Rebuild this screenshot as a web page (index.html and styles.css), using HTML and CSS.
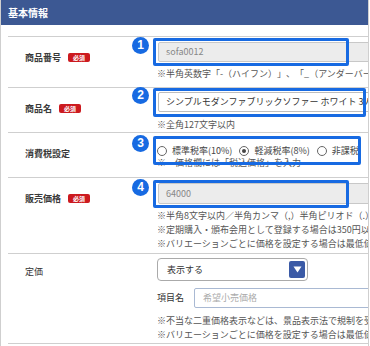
FILE: index.html
```html
<!DOCTYPE html>
<html lang="ja">
<head>
<meta charset="utf-8">
<link rel="stylesheet" href="styles.css">
</head>
<body>
<div class="panel">
  <div class="head">基本情報</div>
  <div class="rows">
    <div class="row r1">
      <div class="label">商品番号<span class="req">必須</span></div>
      <div class="value">
        <div class="input ro">sofa0012</div>
        <div class="note">※半角英数字「-（ハイフン）」、「_（アンダーバー）」</div>
      </div>
      <span class="mark m1"></span><span class="num n1">1</span>
    </div>
    <div class="row r2">
      <div class="label">商品名<span class="req">必須</span></div>
      <div class="value">
        <div class="input">シンプルモダンファブリックソファー ホワイト 3人掛け</div>
        <div class="note">※全角127文字以内</div>
      </div>
      <span class="mark m2"></span><span class="num n2">2</span>
    </div>
    <div class="row r3">
      <div class="label">消費税設定</div>
      <div class="value">
        <div class="radios">
          <span class="opt"><span class="radio"></span>標準税率(10%)</span>
          <span class="opt"><span class="radio on"></span>軽減税率(8%)</span>
          <span class="opt"><span class="radio"></span>非課税</span>
        </div>
        <div class="note tight">※　価格欄には「税込価格」を入力</div>
      </div>
      <span class="mark m3"></span><span class="num n3">3</span>
    </div>
    <div class="row r4">
      <div class="label">販売価格<span class="req">必須</span></div>
      <div class="value">
        <div class="input ro tall">64000</div>
        <div class="notes">
          <div class="note">※半角8文字以内／半角カンマ（,）半角ピリオド（.）</div>
          <div class="note">※定期購入・頒布会用として登録する場合は350円以上</div>
          <div class="note">※バリエーションごとに価格を設定する場合は最低価格</div>
        </div>
      </div>
      <span class="mark m4"></span><span class="num n4">4</span>
    </div>
    <div class="row r5">
      <div class="label">定価</div>
      <div class="value">
        <div class="select">表示する<span class="arrow"><svg width="9" height="7" viewBox="0 0 9 7"><path d="M0.5 0.5 H8.5 L4.5 6.5 Z" fill="#fff"/></svg></span></div>
        <div class="sub">
          <span class="sublabel">項目名</span>
          <div class="input plain">希望小売価格</div>
        </div>
        <div class="notes">
          <div class="note">※不当な二重価格表示などは、景品表示法で規制を受けます</div>
          <div class="note">※バリエーションごとに価格を設定する場合は最低価格</div>
        </div>
      </div>
    </div>
  </div>
</div>
</body>
</html>
```
FILE: styles.css
```css
* { box-sizing: border-box; }
html, body { margin: 0; padding: 0; background: #fff; }
body {
  font-family: "Noto Sans CJK JP", "Noto Sans", sans-serif;
  color: #333;
  text-spacing-trim: space-all;
}
.panel {
  width: 369px;
  height: 346px;
  border-left: 1px solid #cfcfcf;
  border-right: 1px solid #cfcfcf;
  overflow: hidden;
}
.head {
  height: 25px;
  background: #3c5893;
  color: #fff;
  font-size: 10px;
  font-weight: bold;
  line-height: 25px;
  padding-left: 7px;
}
.rows {
  margin-top: 11px;
  margin-left: 7px;
}
.row {
  position: relative;
  display: grid;
  grid-template-columns: 149px 1fr;
  border-top: 1px solid #cfcfcf;
}
.r5 { border-bottom: 1px solid #cfcfcf; }
.label {
  padding-left: 17px;
  padding-top: 14px;
  font-size: 9px;
  line-height: 13px;
  font-weight: bold;
  color: #3a3a3a;
  display: flex;
  align-items: flex-start;
  white-space: nowrap;
}
.r5 .label { padding-top: 11px; font-weight: normal; color: #333; }
.req {
  display: inline-block;
  margin-left: 7px;
  margin-top: 2px;
  width: 22px;
  height: 9px;
  background: #cc1a1f;
  color: #fff;
  font-size: 6px;
  line-height: 9px;
  text-align: center;
  border-radius: 2px;
}
.value { min-width: 0; white-space: nowrap; }
.r1 .value { padding-top: 5px; padding-bottom: 7px; }
.r2 .value { padding-top: 4px; padding-bottom: 1px; }
.r3 .value { padding-top: 12px; padding-bottom: 8px; }
.r4 .value { padding-top: 5px; padding-bottom: 2px; }
.r5 .value { padding-top: 4px; padding-bottom: 1px; }
.input {
  width: 260px;
  height: 20px;
  margin-left: 1px;
  border: 1px solid #bdbdbd;
  border-radius: 2px;
  background: #fff;
  font-size: 9px;
  line-height: 18px;
  padding-left: 7px;
  color: #333;
  overflow: hidden;
}
.input.ro { background: #ececec; color: #888; border-color: #c8c8c8; }
.input.tall { height: 21px; line-height: 19px; }
.note {
  font-size: 9px;
  line-height: 13px;
  color: #555;
}
.r1 .note { margin-top: 5px; }
.r2 .note { margin-top: 6px; }
.note.tight { line-height: 12px; }
.notes { margin-top: 5px; }
.notes .note { line-height: 14px; }
.r5 .notes { margin-top: 6px; }
.radios {
  display: flex;
  font-size: 9px;
  line-height: 12px;
  color: #444;
}
.opt { display: flex; align-items: center; margin-right: 7px; }
.radio {
  width: 10px;
  height: 10px;
  border: 1px solid #666;
  border-radius: 50%;
  margin-right: 5px;
  display: flex;
  align-items: center;
  justify-content: center;
}
.radio.on::after {
  content: "";
  width: 4px;
  height: 4px;
  border-radius: 50%;
  background: #444;
}
.select {
  position: relative;
  width: 151px;
  height: 23px;
  border: 1px solid #aaa;
  border-radius: 4px;
  font-size: 9px;
  line-height: 21px;
  padding-left: 9px;
  color: #333;
}
.arrow {
  position: absolute;
  right: 2px;
  top: 2px;
  width: 16px;
  height: 17px;
  background: #3b5aa6;
  border-radius: 2px;
  display: flex;
  align-items: center;
  justify-content: center;
}
.arrow svg { display: block; }
.sub {
  display: flex;
  align-items: center;
  margin-top: 7px;
}
.sublabel { flex-shrink: 0; font-size: 9px; line-height: 20px; width: 37px; color: #333; }
.input.plain { flex-shrink: 0; margin-left: 0; border-color: #a9b9d3; color: #aaa; padding-left: 8px; }
.mark {
  position: absolute;
  left: 145px;
  border: 3px solid #176ae2;
  border-radius: 2px;
}
.m1 { top: 1px; width: 196px; height: 28px; }
.m2 { top: 0; width: 213px; height: 29px; }
.m3 { top: 3px; width: 208px; height: 29px; }
.m4 { top: 2px; width: 196px; height: 28px; }
.num {
  position: absolute;
  left: 124px;
  width: 17px;
  height: 17px;
  border-radius: 50%;
  background: #176ae2;
  color: #fff;
  font-family: "Liberation Sans", Arial, sans-serif;
  font-weight: bold;
  font-size: 12px;
  line-height: 17px;
  text-align: center;
}
.n1 { top: 0; }
.n2 { top: -1px; }
.n3 { top: 2px; }
.n4 { top: 1px; }
```
